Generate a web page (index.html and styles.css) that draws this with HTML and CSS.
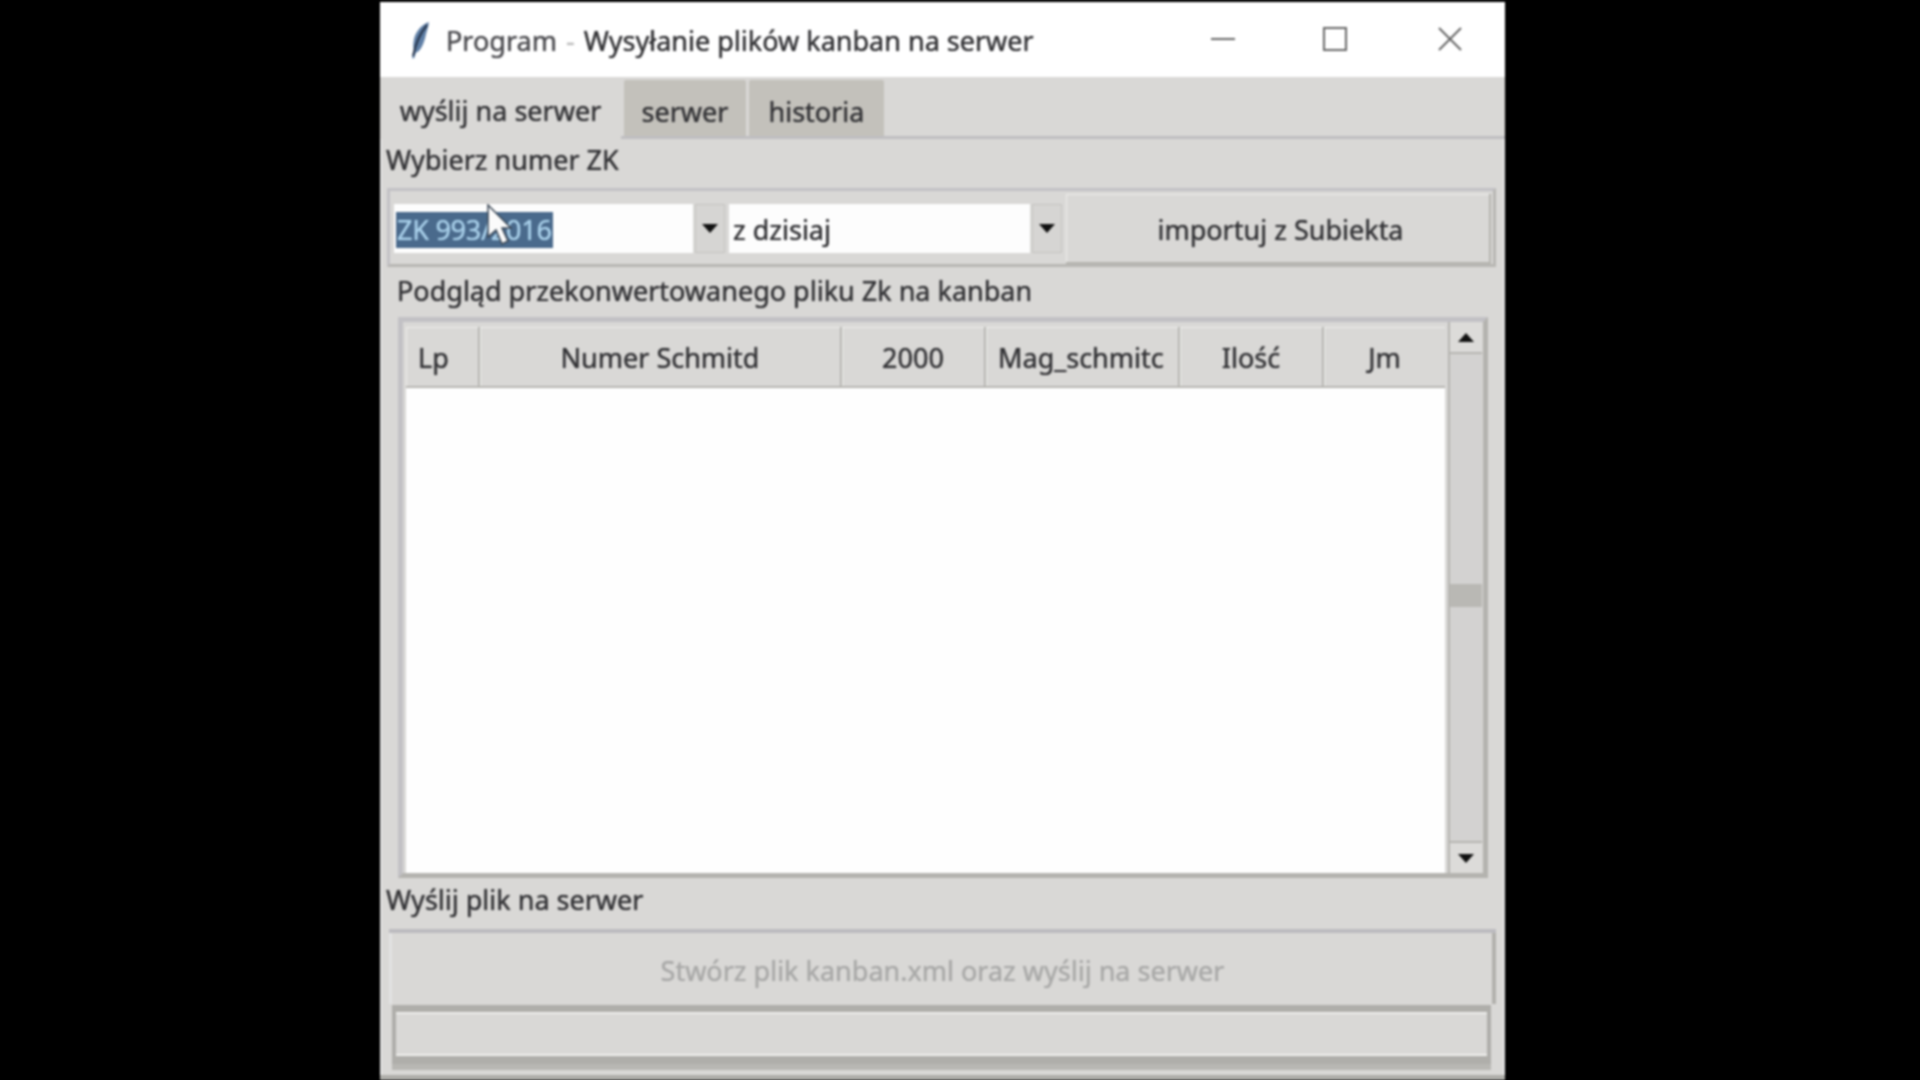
FILE: index.html
```html
<!DOCTYPE html>
<html lang="pl">
<head>
<meta charset="utf-8">
<title>Program - Wysyłanie plików kanban na serwer</title>
<link rel="stylesheet" href="styles.css">
</head>
<body>
<main class="window">
  <header class="titlebar">
    <svg class="feather" viewBox="0 0 24 38" aria-hidden="true">
      <path d="M21 1C14 3 8 10 6 18c-1 5-1 9 0 12l-2 7 2 .5 2-6c4-1 7-7 9-14 1-6 4-12 4-17.500z" fill="#5f7fa6"/>
      <path d="M19 4C13 11 8 21 5 35" fill="none" stroke="#26344a" stroke-width="2"/>
    </svg>
    <h1 class="title"><span class="title-dim">Program</span> <span class="title-dash">-</span> Wysyłanie plików kanban na serwer</h1>
    <div class="controls">
      <svg class="ctl ctl-min" viewBox="0 0 26 26" aria-hidden="true"><path d="M1 13h24" stroke="#666" stroke-width="2"/></svg>
      <svg class="ctl ctl-max" viewBox="0 0 26 26" aria-hidden="true"><rect x="2" y="2" width="22" height="22" fill="none" stroke="#666" stroke-width="2"/></svg>
      <svg class="ctl ctl-close" viewBox="0 0 26 26" aria-hidden="true"><path d="M2 2l22 22M24 2L2 24" stroke="#666" stroke-width="2"/></svg>
    </div>
  </header>

  <nav class="tabs">
    <div class="tab tab-active">wyślij na serwer</div>
    <div class="tab tab-serwer">serwer</div>
    <div class="tab tab-historia">historia</div>
  </nav>

  <section class="pane">
    <div class="label label-zk">Wybierz numer ZK</div>
    <div class="frame-zk">
      <div class="combo combo-zk">
        <div class="field"><span class="selected">ZK 993/2016</span></div>
        <div class="arrow-btn"><span class="tri-down"></span></div>
      </div>
      <div class="combo combo-date">
        <div class="field">z dzisiaj</div>
        <div class="arrow-btn"><span class="tri-down"></span></div>
      </div>
      <div class="btn btn-import">importuj z Subiekta</div>
      <svg class="cursor" viewBox="0 0 26 42" aria-hidden="true">
        <path d="M2 1v32l8-7 6 14 6-3-6-13h9z" fill="#fbfbfb" stroke="#3a4654" stroke-width="1.500"/>
      </svg>
    </div>

    <div class="label label-preview">Podgląd przekonwertowanego pliku Zk na kanban</div>
    <div class="table-frame">
      <div class="table">
        <div class="thead">
          <div class="th col-lp">Lp</div>
          <div class="th col-num">Numer Schmitd</div>
          <div class="th col-2000">2000</div>
          <div class="th col-mag"><span class="clip">Mag_schmitc</span></div>
          <div class="th col-ilosc">Ilość</div>
          <div class="th col-jm">Jm</div>
        </div>
        <div class="tbody"></div>
      </div>
      <div class="scrollbar">
        <div class="sb-btn sb-up"><span class="tri-up"></span></div>
        <div class="sb-track">
          <div class="sb-thumb"></div>
        </div>
        <div class="sb-btn sb-down"><span class="tri-down"></span></div>
      </div>
    </div>

    <div class="label label-send">Wyślij plik na serwer</div>
    <div class="btn btn-send">Stwórz plik kanban.xml oraz wyślij na serwer</div>
    <div class="progress"></div>
  </section>
</main>
</body>
</html>
```

FILE: styles.css
```css
* { box-sizing: border-box; margin: 0; padding: 0; }

html, body { height: 100%; background: #000; overflow: hidden; }

body {
  font-family: "Noto Sans", "Open Sans", sans-serif;
  font-size: 27px;
  color: #333336;
  text-shadow: 0 0 1px currentColor;
  padding-left: 380px;
  padding-top: 2px;
}

.window {
  width: 1125px;
  height: 1078px;
  background: #d9d8d6;
  display: flex;
  flex-direction: column;
  filter: blur(0.9px);
}

.titlebar {
  height: 75px;
  flex: none;
  background: #fff;
  display: flex;
  align-items: center;
  padding-left: 28px;
}

.feather { width: 24px; height: 38px; margin-right: 14px; }

.title { font-size: 27px; font-weight: 400; color: #333336; white-space: nowrap; padding-top: 2px; }
.title-dim { color: #4c4c50; }
.title-dash { color: #bbb; margin: 0 2px; }

.controls { margin-left: auto; display: flex; align-items: center; }
.ctl { width: 26px; height: 26px; display: block; margin-top: -2px; }
.ctl-min { margin-right: 86px; }
.ctl-max { margin-right: 89px; }
.ctl-close { margin-right: 42px; }

.tabs { height: 59px; flex: none; display: flex; align-items: flex-end; gap: 3px; }

.tab {
  height: 56px;
  display: flex;
  align-items: center;
  justify-content: center;
  padding-top: 6px;
  background: #c3c1bb;
  border-radius: 2px 2px 0 0;
}

.tab-active {
  width: 241px;
  height: 62px;
  margin-bottom: -3px;
  padding-top: 5px;
  background: #d9d8d6;
  position: relative;
  z-index: 1;
}
.tab-serwer { width: 122px; }
.tab-historia { width: 135px; }

.pane {
  flex: 1;
  min-height: 0;
  display: flex;
  flex-direction: column;
  box-shadow: inset 0 3px 0 #bfbec1, inset 0 -5px 0 #aeada9, inset 2px 0 0 #e2e2e2, inset -2px 0 0 #e2e2e2;
}

.label { white-space: nowrap; }
.label-zk { height: 52px; padding: 3px 0 0 6px; line-height: 42px; }
.label-preview { height: 50px; padding-left: 17px; line-height: 48px; }
.label-send { height: 51px; padding-left: 6px; line-height: 43px; }

.frame-zk {
  position: relative;
  height: 79px;
  width: 1109px;
  margin-left: 7px;
  border: 3px solid #c2c1c5;
  border-right-color: #b8b7b3;
  border-bottom-color: #b8b7b3;
  display: flex;
  align-items: center;
  padding: 2px 0 0 4px;
  gap: 4px;
}

.combo { height: 49px; display: flex; align-items: stretch; gap: 2px; }
.combo-zk { width: 331px; }
.combo-date { width: 333px; }

.field {
  flex: 1;
  background: #fdfdfd;
  padding: 1px 4px 0;
  line-height: 49px;
  display: block;
}

.combo-zk .field { padding-left: 2px; }

.selected {
  background: #4a6a8c;
  color: #a9d0ea;
  display: inline-block;
  line-height: 36px;
  padding: 0 1px;
  letter-spacing: -0.25px;
}

.arrow-btn {
  width: 30px;
  flex: none;
  background: #d6d5d3;
  display: flex;
  align-items: center;
  justify-content: center;
  box-shadow: inset 0 0 0 1px #c4c3c0;
}

.tri-down, .tri-up { width: 0; height: 0; border-left: 8px solid transparent; border-right: 8px solid transparent; }
.tri-down { border-top: 9px solid #111; }
.tri-up { border-bottom: 9px solid #111; }

.btn {
  display: flex;
  align-items: center;
  justify-content: center;
  background: #d9d8d6;
}

.btn-import {
  flex: 1;
  height: 70px;
  padding: 2px 0 0 4px;
  box-shadow: inset -2px -2px 0 #b5b4af, inset 1px 1px 0 #eeeeec;
  margin-right: 2px;
}

.cursor { position: absolute; left: 96px; top: 13px; width: 26px; height: 42px; }

.table-frame {
  height: 561px;
  width: 1090px;
  margin-left: 18px;
  border: solid #c2c1c5;
  border-width: 5px;
  border-right-color: #b4b3af;
  border-bottom-color: #b4b3af;
  padding-left: 3px;
  display: flex;
  gap: 3px;
}

.table { width: 1039px; margin-top: 5px; display: flex; flex-direction: column; }

.thead { height: 61px; flex: none; display: flex; gap: 2px; background: #b6b5b1; padding-bottom: 2px; }

.th {
  display: flex;
  align-items: center;
  justify-content: center;
  padding-top: 2px;
  background: #d9d8d6;
  white-space: nowrap;
  overflow: hidden;
  box-shadow: inset 1px 1px 0 #eeeeec;
}

.col-lp { width: 72px; justify-content: flex-start; padding-left: 12px; }
.col-num { width: 360px; }
.col-2000 { width: 142px; }
.col-mag { width: 192px; justify-content: flex-start; padding-left: 12px; }
.col-ilosc { width: 142px; }
.col-jm { width: 121px; }

.clip { display: block; width: 169px; overflow: hidden; }

.tbody { flex: 1; background: #fefefe; }

.scrollbar { width: 34px; display: flex; flex-direction: column; border-left: 2px solid #b6b5b1; }

.sb-btn { flex: none; display: flex; align-items: center; justify-content: center; background: #dcdbd9; }
.sb-up { height: 32px; border-bottom: 2px solid #b6b5b1; }
.sb-down { height: 32px; border-top: 2px solid #b6b5b1; }

.sb-track { flex: 1; background: #d3d2d1; padding-top: 230px; }
.sb-thumb { height: 23px; background: #b9b8b4; }

.btn-send {
  width: 1107px;
  height: 75px;
  flex: none;
  margin-left: 9px;
  padding-top: 7px;
  color: #a9a9a8;
  box-shadow: inset 0 4px 0 #bcbbbf, inset 3px 0 0 #e2e2e2, inset -4px 0 0 #b2b1ad;
}

.progress {
  width: 1091px;
  height: 44px;
  flex: none;
  margin: 8px 0 0 16px;
  box-shadow: inset 0 2px 0 #ededeb, inset 0 -2px 0 #f0f0ee, 0 0 0 8px #afaeaa, 0 10px 0 8px #b8b7b3;
  clip-path: inset(-7px -4px -14px -4px);
}
```
